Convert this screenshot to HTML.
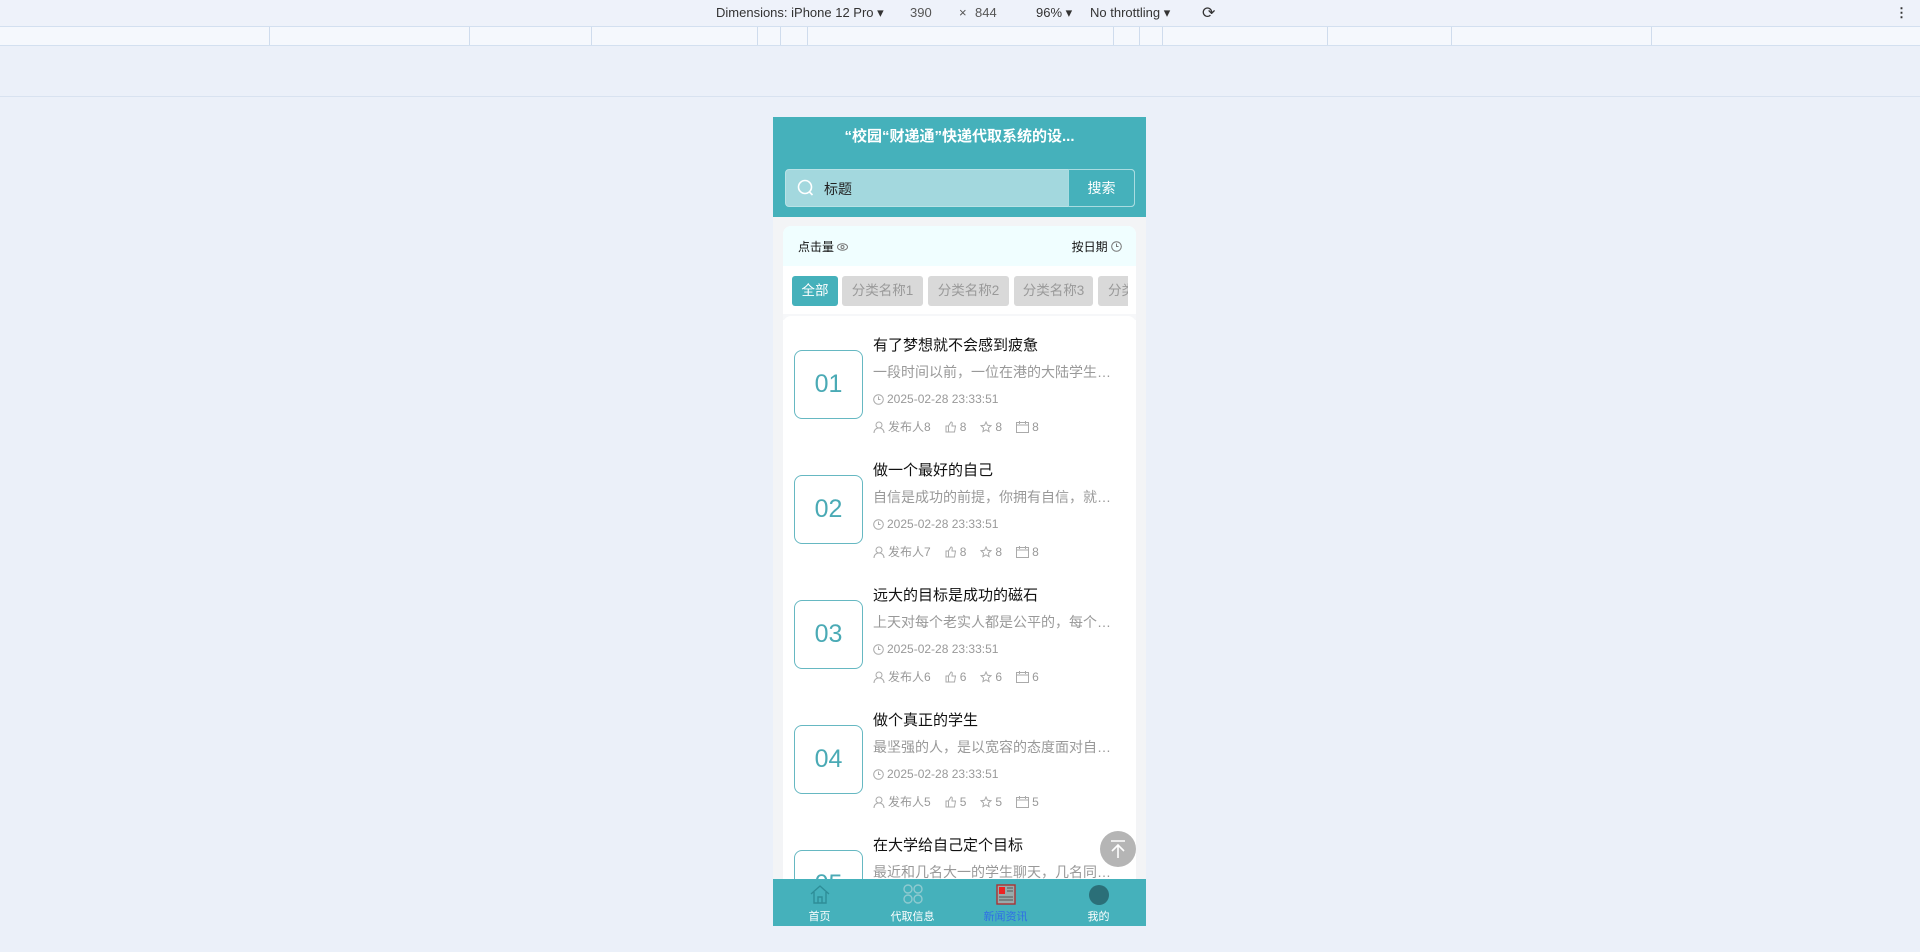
<!DOCTYPE html>
<html><head><meta charset="utf-8"><style>
*{margin:0;padding:0;box-sizing:border-box}
html,body{width:1920px;height:952px;overflow:hidden}
body{background:#ebf0f9;font-family:"Liberation Sans","Noto Sans CJK SC",sans-serif;position:relative}
.tb{position:absolute;left:0;top:0;width:1920px;height:26px;background:#eef2fa;font-size:13px;color:#333}
.tb span{position:absolute;top:5px}
.ruler{position:absolute;left:0;top:26px;width:1920px;height:20px;background:#f5f8fd;border-top:1px solid #d3e0f0;border-bottom:1px solid #d3e0f0}
.ruler i{position:absolute;top:0;height:18px;width:1px;background:#cfdced}
.line{position:absolute;left:0;top:96px;width:1920px;height:1px;background:#d8e2f0}
.ph{position:absolute;left:773px;top:117px;width:373px;height:809px;background:#f3f4f6;overflow:hidden}
.hd{position:absolute;left:0;top:0;width:373px;height:100px;background:#45b1bb}
.tt{position:absolute;top:10px;width:100%;text-align:center;color:#fff;font-weight:bold;font-size:15px;line-height:20px}
.sb{position:absolute;left:12px;top:52px;width:350px;height:38px;background:#a3d8de;border-radius:4px;border:1px solid #b9e2e6}
.sb .in{position:absolute;left:38px;top:9px;font-size:14px;color:#222}
.sb .bt{position:absolute;right:-1px;top:-1px;width:67px;height:38px;background:#45b1bb;border:1px solid #a9dce1;border-radius:0 4px 4px 0;color:#fff;font-size:14px;text-align:center;line-height:36px}
.card{position:absolute;left:10px;top:109px;width:353px;height:700px;background:#fff;border-radius:8px}
.sort{position:absolute;left:0;top:0;width:353px;height:40px;background:#f0feff;border-radius:8px 8px 0 0;font-size:12px;color:#111}
.chip{position:absolute;top:50px;height:30px;border-radius:3px;background:#d9d9d9;color:#999;font-size:13.5px;line-height:30px;text-align:center;white-space:nowrap;overflow:hidden}
.it{position:absolute;left:0;width:353px;height:125px}
.box{position:absolute;left:11px;top:34px;width:69px;height:69px;border:1px solid #66b8c2;border-radius:8px;color:#4aaab5;font-size:25px;text-align:center;line-height:67px}
.ti{position:absolute;left:90px;top:18px;font-size:15px;color:#111}
.ds{position:absolute;left:90px;top:46px;width:240px;font-size:14px;color:#999;white-space:nowrap;overflow:hidden;text-overflow:ellipsis}
.dt{position:absolute;left:90px;top:76px;font-size:12px;color:#999}
.mt{position:absolute;left:90px;top:102px;font-size:12px;color:#999;white-space:nowrap}
.mt b{font-weight:normal;margin-right:14px}
svg.i{vertical-align:-2px;margin-right:3px}
.nav{position:absolute;left:0;top:762px;width:373px;height:47px;background:#45b1bb}
.nv{position:absolute;top:0;width:93px;text-align:center;font-size:11px;color:#fff}
</style></head><body>
<div class="tb">
<span style="left:716px">Dimensions: iPhone 12 Pro ▾</span>
<span style="left:910px;color:#555">390</span><span style="left:959px;color:#555">×</span><span style="left:975px;color:#555">844</span>
<span style="left:1036px">96% ▾</span><span style="left:1090px">No throttling ▾</span>
<span style="left:1202px;top:3px;font-size:16px">⟳</span>
<span style="left:1895px;font-weight:bold">⋮</span>
</div>
<div class="ruler"><i style="left:269px"></i><i style="left:469px"></i><i style="left:591px"></i><i style="left:757px"></i><i style="left:780px"></i><i style="left:807px"></i><i style="left:1113px"></i><i style="left:1139px"></i><i style="left:1162px"></i><i style="left:1327px"></i><i style="left:1451px"></i><i style="left:1651px"></i></div>
<div class="line"></div>
<div class="ph">
<div class="hd"><div class="tt">“校园“财递通”快递代取系统的设...</div>
<div class="sb"><svg style="position:absolute;left:11px;top:9px" width="18" height="18" viewBox="0 0 18 18"><circle cx="8" cy="8" r="6.5" fill="none" stroke="#fff" stroke-width="1.6"/><path d="M12.5 13l3 3" stroke="#fff" stroke-width="1.6"/></svg><span class="in">标题</span><div class="bt">搜索</div></div></div>
<div class="card">
<div class="sort"><span style="position:absolute;left:15px;top:12px">点击量 <svg width="11" height="8" viewBox="0 0 11 8"><ellipse cx="5.5" cy="4" rx="5" ry="3.3" fill="none" stroke="#777"/><circle cx="5.5" cy="4" r="1.5" fill="none" stroke="#777"/></svg></span><span style="position:absolute;right:14px;top:12px">按日期 <svg width="11" height="11" viewBox="0 0 11 11" style="vertical-align:-1px"><circle cx="5.5" cy="5.5" r="4.8" fill="none" stroke="#777"/><path d="M5.5 2.5v3h2" fill="none" stroke="#777"/></svg></span></div>
<div class="chip" style="left:9px;width:46px;background:#45b1bb;color:#fff">全部</div>
<div class="chip" style="left:59px;width:81px">分类名称1</div>
<div class="chip" style="left:145px;width:81px">分类名称2</div>
<div class="chip" style="left:231px;width:79px">分类名称3</div>
<div class="chip" style="left:315px;width:30px;border-radius:3px 0 0 3px;text-align:left;padding-left:10px">分类</div>
<div style="position:absolute;left:0;top:88px;width:353px;height:6px;background:#f6f7f9"></div>
<div style="position:absolute;left:0;top:90px;width:353px;height:610px;background:#fff;border-radius:8px">
<div class="it" style="top:0"><div class="box">01</div><div class="ti">有了梦想就不会感到疲惫</div><div class="ds">一段时间以前，一位在港的大陆学生，在港的大陆学生</div><div class="dt"><svg class="i" width="11" height="11" viewBox="0 0 11 11"><circle cx="5.5" cy="5.5" r="4.8" fill="none" stroke="#aaa"/><path d="M5.5 2.5v3h2" fill="none" stroke="#aaa"/></svg>2025-02-28 23:33:51</div><div class="mt"><b><svg class="i" width="12" height="12" viewBox="0 0 12 12"><circle cx="6" cy="4" r="3" fill="none" stroke="#aaa"/><path d="M1 12c0-3 2-5 5-5s5 2 5 5" fill="none" stroke="#aaa"/></svg>发布人8</b><b><svg class="i" width="12" height="12" viewBox="0 0 12 12"><path d="M1 5h2.5v6H1zM3.5 5l2.5-4c1 0 1.5.7 1.2 2L7 5h3.5l-1 6h-6" fill="none" stroke="#aaa"/></svg>8</b><b><svg class="i" width="12" height="12" viewBox="0 0 12 12"><path d="M6 1l1.5 3.3 3.5.4-2.6 2.4.7 3.5L6 8.8 2.9 10.6l.7-3.5L1 4.7l3.5-.4z" fill="none" stroke="#aaa"/></svg>8</b><b><svg class="i" width="13" height="12" viewBox="0 0 13 12"><rect x=".5" y="1.5" width="12" height="10" fill="none" stroke="#aaa"/><path d="M.5 4h12M3.5 0v3M9.5 0v3" stroke="#aaa"/></svg>8</b></div></div>
<div class="it" style="top:125px"><div class="box">02</div><div class="ti">做一个最好的自己</div><div class="ds">自信是成功的前提，你拥有自信，就拥有了成功</div><div class="dt"><svg class="i" width="11" height="11" viewBox="0 0 11 11"><circle cx="5.5" cy="5.5" r="4.8" fill="none" stroke="#aaa"/><path d="M5.5 2.5v3h2" fill="none" stroke="#aaa"/></svg>2025-02-28 23:33:51</div><div class="mt"><b><svg class="i" width="12" height="12" viewBox="0 0 12 12"><circle cx="6" cy="4" r="3" fill="none" stroke="#aaa"/><path d="M1 12c0-3 2-5 5-5s5 2 5 5" fill="none" stroke="#aaa"/></svg>发布人7</b><b><svg class="i" width="12" height="12" viewBox="0 0 12 12"><path d="M1 5h2.5v6H1zM3.5 5l2.5-4c1 0 1.5.7 1.2 2L7 5h3.5l-1 6h-6" fill="none" stroke="#aaa"/></svg>8</b><b><svg class="i" width="12" height="12" viewBox="0 0 12 12"><path d="M6 1l1.5 3.3 3.5.4-2.6 2.4.7 3.5L6 8.8 2.9 10.6l.7-3.5L1 4.7l3.5-.4z" fill="none" stroke="#aaa"/></svg>8</b><b><svg class="i" width="13" height="12" viewBox="0 0 13 12"><rect x=".5" y="1.5" width="12" height="10" fill="none" stroke="#aaa"/><path d="M.5 4h12M3.5 0v3M9.5 0v3" stroke="#aaa"/></svg>8</b></div></div>
<div class="it" style="top:250px"><div class="box">03</div><div class="ti">远大的目标是成功的磁石</div><div class="ds">上天对每个老实人都是公平的，每个人都有机会</div><div class="dt"><svg class="i" width="11" height="11" viewBox="0 0 11 11"><circle cx="5.5" cy="5.5" r="4.8" fill="none" stroke="#aaa"/><path d="M5.5 2.5v3h2" fill="none" stroke="#aaa"/></svg>2025-02-28 23:33:51</div><div class="mt"><b><svg class="i" width="12" height="12" viewBox="0 0 12 12"><circle cx="6" cy="4" r="3" fill="none" stroke="#aaa"/><path d="M1 12c0-3 2-5 5-5s5 2 5 5" fill="none" stroke="#aaa"/></svg>发布人6</b><b><svg class="i" width="12" height="12" viewBox="0 0 12 12"><path d="M1 5h2.5v6H1zM3.5 5l2.5-4c1 0 1.5.7 1.2 2L7 5h3.5l-1 6h-6" fill="none" stroke="#aaa"/></svg>6</b><b><svg class="i" width="12" height="12" viewBox="0 0 12 12"><path d="M6 1l1.5 3.3 3.5.4-2.6 2.4.7 3.5L6 8.8 2.9 10.6l.7-3.5L1 4.7l3.5-.4z" fill="none" stroke="#aaa"/></svg>6</b><b><svg class="i" width="13" height="12" viewBox="0 0 13 12"><rect x=".5" y="1.5" width="12" height="10" fill="none" stroke="#aaa"/><path d="M.5 4h12M3.5 0v3M9.5 0v3" stroke="#aaa"/></svg>6</b></div></div>
<div class="it" style="top:375px"><div class="box">04</div><div class="ti">做个真正的学生</div><div class="ds">最坚强的人，是以宽容的态度面对自己的人</div><div class="dt"><svg class="i" width="11" height="11" viewBox="0 0 11 11"><circle cx="5.5" cy="5.5" r="4.8" fill="none" stroke="#aaa"/><path d="M5.5 2.5v3h2" fill="none" stroke="#aaa"/></svg>2025-02-28 23:33:51</div><div class="mt"><b><svg class="i" width="12" height="12" viewBox="0 0 12 12"><circle cx="6" cy="4" r="3" fill="none" stroke="#aaa"/><path d="M1 12c0-3 2-5 5-5s5 2 5 5" fill="none" stroke="#aaa"/></svg>发布人5</b><b><svg class="i" width="12" height="12" viewBox="0 0 12 12"><path d="M1 5h2.5v6H1zM3.5 5l2.5-4c1 0 1.5.7 1.2 2L7 5h3.5l-1 6h-6" fill="none" stroke="#aaa"/></svg>5</b><b><svg class="i" width="12" height="12" viewBox="0 0 12 12"><path d="M6 1l1.5 3.3 3.5.4-2.6 2.4.7 3.5L6 8.8 2.9 10.6l.7-3.5L1 4.7l3.5-.4z" fill="none" stroke="#aaa"/></svg>5</b><b><svg class="i" width="13" height="12" viewBox="0 0 13 12"><rect x=".5" y="1.5" width="12" height="10" fill="none" stroke="#aaa"/><path d="M.5 4h12M3.5 0v3M9.5 0v3" stroke="#aaa"/></svg>5</b></div></div>
<div class="it" style="top:500px"><div class="box">05</div><div class="ti">在大学给自己定个目标</div><div class="ds">最近和几名大一的学生聊天，几名同学都说</div></div>
</div></div>
<div style="position:absolute;left:327px;top:714px;width:36px;height:36px;border-radius:50%;background:#b5b5b5"><svg width="36" height="36" viewBox="0 0 36 36"><path d="M11 10h14M18 27V14M12 20l6-6 6 6" fill="none" stroke="#fff" stroke-width="1.6"/></svg></div>
<div class="nav">
<div class="nv" style="left:0"><svg width="24" height="22" viewBox="0 0 24 22" style="margin-top:4px"><path d="M3 11L12 3l9 8M6 9v11h12V9M10 20v-6h4v6" fill="none" stroke="#2e8e98" stroke-width="1.4"/></svg><div style="margin-top:0">首页</div></div>
<div class="nv" style="left:93px"><svg width="24" height="22" viewBox="0 0 24 22" style="margin-top:4px"><g fill="none" stroke="#8fcad0" stroke-width="1.4"><circle cx="7" cy="6" r="4"/><circle cx="17" cy="6" r="4"/><circle cx="7" cy="16" r="4"/><circle cx="17" cy="16" r="4"/></g></svg><div style="margin-top:0">代取信息</div></div>
<div class="nv" style="left:186px;color:#2f6fe6"><svg width="24" height="22" viewBox="0 0 24 22" style="margin-top:4px"><rect x="3" y="2" width="18" height="19" fill="#9aa" stroke="#a33" stroke-width="1.4"/><rect x="5" y="4" width="6" height="7" fill="#e22"/><path d="M13 5h6M13 8h6M5 14h14M5 17h14" stroke="#555"/></svg><div style="margin-top:0">新闻资讯</div></div>
<div class="nv" style="left:279px"><svg width="24" height="22" viewBox="0 0 24 22" style="margin-top:4px"><circle cx="12" cy="12" r="10" fill="#2b6f78"/></svg><div style="margin-top:0">我的</div></div>
</div>
</div>
</body></html>
